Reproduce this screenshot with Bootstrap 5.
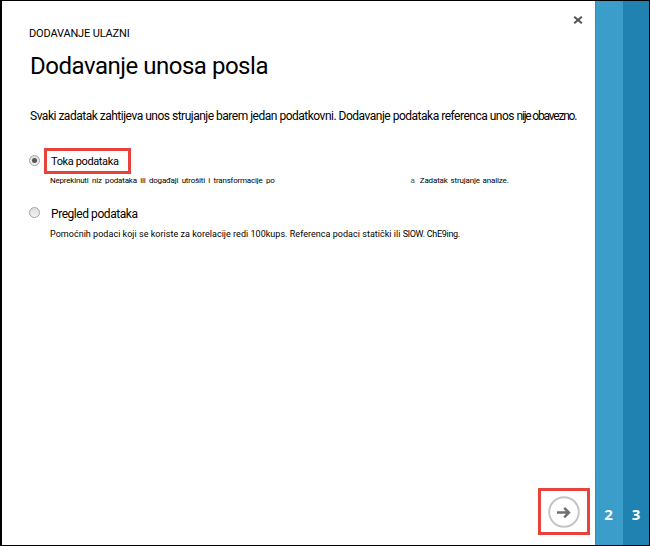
<!DOCTYPE html>
<html lang="hr">
<head>
<meta charset="utf-8">
<meta name="viewport" content="width=device-width, initial-scale=1">
<title>Dodavanje unosa posla</title>
<link href="https://cdn.jsdelivr.net/npm/bootstrap@5.3.0/dist/css/bootstrap.min.css" rel="stylesheet">
<style>
body{font-family:Roboto,"Liberation Sans",Arial,sans-serif;color:#000;background:#fff}
.wizard{width:650px;height:546px;border:1px solid #000;border-left-width:2px;overflow:hidden}
.pane{width:593px;padding:12px 5px 10px 27px;flex:none}
.ln{white-space:pre;line-height:16px}
.closer{padding-right:5px;height:14px}
.over{font-size:11px;margin-top:-1px;letter-spacing:-.159px}
.ttl{font-size:24px;line-height:30px;margin:9px 0 0 1px;font-weight:400;letter-spacing:-.48px}
.intro{font-size:12px;margin:27px 0 0 1px;letter-spacing:-.492px}
.intro .tight{letter-spacing:-1.2px}
.pick-stream{margin-top:24px}
.pick-ref{margin-top:17px}
.rad{width:11px;height:11px;border:1px solid #a4a4a4;border-radius:50%;background:linear-gradient(#dedede,#f2f2f2);flex:none}
.pick-stream .rad{margin-bottom:1px}
.rad.on::after{content:"";width:5px;height:5px;border-radius:50%;background:#555}
.tag{border:3px solid #e8423c;width:87px;height:26px;margin-left:4px;padding-left:4px;line-height:22px;font-size:11px;letter-spacing:-.375px}
.ref-name{font-size:12px;margin-left:11px;letter-spacing:-.443px}
.pick-ref .rad{margin-bottom:3px}
.note{margin-left:21px}
.note-stream{font-size:8px;margin-top:-1px;letter-spacing:-.2px;word-spacing:1.65px}
.note-stream .art{margin-left:136px;color:#555}
.note-stream .job{margin-left:5px;letter-spacing:-.16px;word-spacing:1px}
.note-ref{font-size:9px;margin-top:4px;letter-spacing:.03px}
.note-ref .tight{letter-spacing:-.3px}
.next{width:52px;height:47px;border:3px solid #e8423c}
.step{color:#fff;font:700 15px "Open Sans",sans-serif;line-height:20px;padding-bottom:21px;flex:none}
.s2{width:28px;background:#3b9dc9;border-left:1px solid #2c8fbf;padding-right:2px}
.s3{background:#1f82b0;width:26px}
</style>
</head>
<body>
<div class="wizard d-flex">
  <main class="pane d-flex flex-column">
    <div class="closer d-flex justify-content-end"><svg width="14" height="14" viewBox="0 0 14 14"><path d="M3.2 3.7l7.6 6.6M10.8 3.7l-7.6 6.6" stroke="#555" stroke-width="2"/></svg></div>
    <div class="ln over">DODAVANJE ULAZNI</div>
    <h1 class="ln ttl">Dodavanje unosa posla</h1>
    <p class="ln intro">Svaki zadatak zahtijeva unos strujanje barem jedan podatkovni. Dodavanje podataka referenca unos <span class="tight">nije obavezno.</span></p>
    <div class="pick-stream d-flex align-items-center"><span class="rad on d-flex align-items-center justify-content-center"></span><div class="ln tag">Toka podataka</div></div>
    <div class="ln note note-stream">Neprekinuti niz podataka ili događaji utrošiti i transformacije po<span class="art">a</span><span class="job">Zadatak strujanje analize.</span></div>
    <div class="pick-ref d-flex align-items-center"><span class="rad"></span><div class="ln ref-name">Pregled podataka</div></div>
    <div class="ln note note-ref">Pomoćnih podaci koji se koriste za korelacije redi 100kups. Referenca podaci statički ili <span class="tight">SlOW. ChE9ing.</span></div>
    <div class="next mt-auto align-self-end d-flex align-items-center justify-content-center"><svg width="34" height="34" viewBox="0 0 34 34" fill="none"><circle cx="17" cy="17" r="14.8" stroke="#c4c4c4" stroke-width="1.9"/><path d="M10 17.6h12M17.2 12.9l4.7 4.7-4.7 4.7" stroke="#707070" stroke-width="2.5"/></svg></div>
  </main>
  <div class="step s2 d-flex align-items-end justify-content-center"><span>2</span></div>
  <div class="step s3 d-flex align-items-end justify-content-center"><span>3</span></div>
</div>
</body>
</html>
